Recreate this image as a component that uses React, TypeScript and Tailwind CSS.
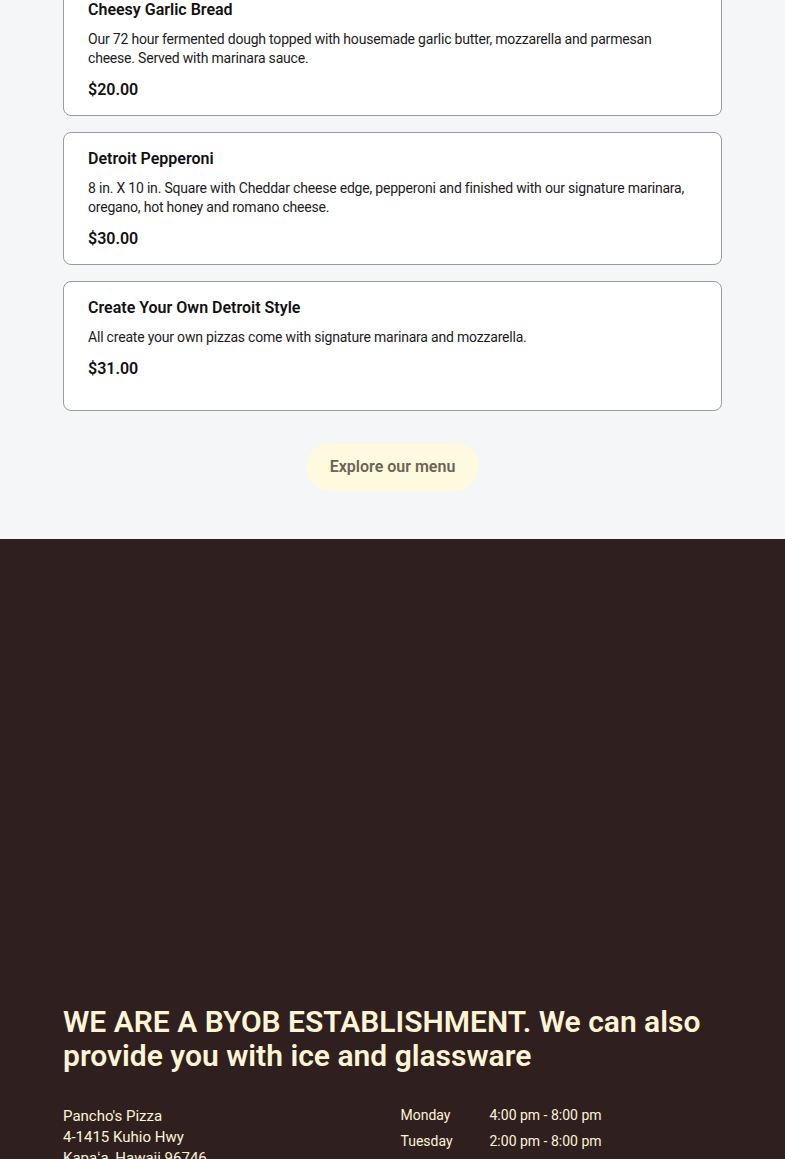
import React from 'react'

const items = [
  {
    name: 'Cheesy Garlic Bread',
    desc: 'Our 72 hour fermented dough topped with housemade garlic butter, mozzarella and parmesan cheese. Served with marinara sauce.',
    price: '$20.00',
  },
  {
    name: 'Detroit Pepperoni',
    desc: '8 in. X 10 in. Square with Cheddar cheese edge, pepperoni and finished with our signature marinara, oregano, hot honey and romano cheese.',
    price: '$30.00',
  },
  {
    name: 'Create Your Own Detroit Style',
    desc: 'All create your own pizzas come with signature marinara and mozzarella.',
    price: '$31.00',
  },
]

const hours = [
  { day: 'Monday', time: '4:00 pm - 8:00 pm' },
  { day: 'Tuesday', time: '2:00 pm - 8:00 pm' },
  { day: 'Wednesday', time: '2:00 pm - 8:00 pm' },
]

export default function App() {
  return (
    <div className="min-h-screen w-full overflow-hidden bg-[#301f1f] font-['Roboto',sans-serif]">
      {/* Menu list */}
      <section className="bg-[#f5f6f8] px-[63px] pb-12">
        <div className="-mt-[17px] flex flex-col gap-4">
          {items.map((item) => (
            <div
              key={item.name}
              className="min-h-[130px] rounded-lg border border-[#9a9ca3] bg-white px-6 pt-[14px] pb-[13px]"
            >
              <h3 className="text-[16px] leading-[24px] font-semibold text-[#111]">{item.name}</h3>
              <p className="mt-[8px] text-[14px] leading-[19px] tracking-[-0.2px] text-[#1c1c1c]">{item.desc}</p>
              <p className="mt-[10px] text-[16px] leading-[24px] font-semibold text-[#111]">{item.price}</p>
            </div>
          ))}
        </div>
        <div className="mt-8 flex justify-center">
          <button className="h-12 w-[173px] rounded-full bg-[#fefae0] text-[16px] font-semibold text-[#6b6456]">
            Explore our menu
          </button>
        </div>
      </section>

      {/* Footer */}
      <footer className="px-[63px] pt-[466px] pb-10">
        <h2 className="text-[30px] leading-[34px] font-semibold text-[#fdf5d6]">
          WE ARE A BYOB ESTABLISHMENT. We can also provide you with ice and glassware
        </h2>
        <div className="mt-[33px] grid grid-cols-2 gap-x-4">
          <div className="text-[15px] leading-[21px] text-[#fdf5d6]">
            <p>Pancho's Pizza</p>
            <p>4-1415 Kuhio Hwy</p>
            <p>Kapaʻa, Hawaii 96746</p>
          </div>
          <div className="flex flex-col gap-[7px] text-[14px] leading-[19px] text-[#fdf5d6]">
            {hours.map((h) => (
              <div key={h.day} className="flex">
                <span className="w-[89px]">{h.day}</span>
                <span>{h.time}</span>
              </div>
            ))}
          </div>
        </div>
      </footer>
    </div>
  )
}
